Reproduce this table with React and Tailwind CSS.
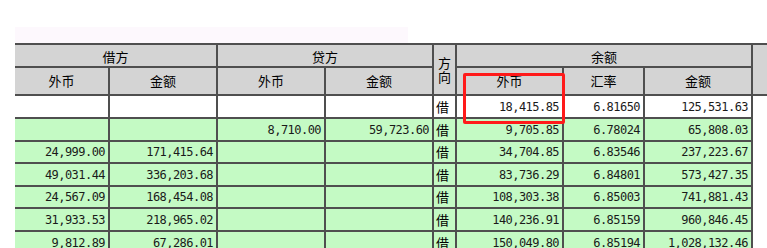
import React from 'react'

const cn = '"Noto Sans CJK SC", "Noto Sans", sans-serif'
const mono = '"DejaVu Sans Mono", "Liberation Mono", monospace'

// rows: [debit fx, debit amt, credit fx, credit amt, dir, bal fx, rate, bal amt]
const rows = [
  ['', '', '', '', '借', '18,415.85', '6.81650', '125,531.63'],
  ['', '', '8,710.00', '59,723.60', '借', '9,705.85', '6.78024', '65,808.03'],
  ['24,999.00', '171,415.64', '', '', '借', '34,704.85', '6.83546', '237,223.67'],
  ['49,031.44', '336,203.68', '', '', '借', '83,736.29', '6.84801', '573,427.35'],
  ['24,567.09', '168,454.08', '', '', '借', '108,303.38', '6.85003', '741,881.43'],
  ['31,933.53', '218,965.02', '', '', '借', '140,236.91', '6.85159', '960,846.45'],
  ['9,812.89', '67,286.01', '', '', '借', '150,049.80', '6.85194', '1,028,132.46'],
]

function Head({ children, className = '' }) {
  return (
    <div
      className={`bg-[#d4d4d4] flex items-center justify-center text-[13px] text-black ${className}`}
      style={{ fontFamily: cn }}
    >
      {children}
    </div>
  )
}

function Num({ value, bg }) {
  return (
    <div
      className={`${bg} flex items-center justify-end pr-[3px] text-[12px] tracking-[-0.55px] text-[#1a1a1a] whitespace-nowrap`}
      style={{ fontFamily: mono }}
    >
      {value}
    </div>
  )
}

export default function App() {
  return (
    <div className="relative w-[767px] h-[248px] overflow-hidden bg-white">
      <div className="ml-[15px] mt-[27px] w-[393px] h-[16px] bg-[#fdf8fd]" />

      <div className="ml-[15px] w-[752px] border-t-2 border-[#4f4f4f] bg-[#4f4f4f] grid grid-cols-[93px_106px_106px_106px_21px_105px_79px_106px_1fr] grid-rows-[21px_26px_21px_21px_20px_21px_20px_21px_21px] gap-[2px]">
        {/* header row 1 */}
        <Head className="col-span-2 pt-[3px]">借方</Head>
        <Head className="col-span-2 pt-[3px]">贷方</Head>
        <Head className="row-span-2 flex-col leading-[14px] pt-[1px]">
          <span>方</span>
          <span>向</span>
        </Head>
        <Head className="col-span-3 pt-[3px]">余额</Head>
        <Head className="row-span-2" />

        {/* header row 2 */}
        <Head>外币</Head>
        <Head>金额</Head>
        <Head>外币</Head>
        <Head>金额</Head>
        <Head>外币</Head>
        <Head>汇率</Head>
        <Head>金额</Head>

        {rows.map((r, i) => {
          const bg = i === 0 ? 'bg-white' : 'bg-[#c4fac4]'
          return (
            <React.Fragment key={i}>
              <Num value={r[0]} bg={bg} />
              <Num value={r[1]} bg={bg} />
              <Num value={r[2]} bg={bg} />
              <Num value={r[3]} bg={bg} />
              <div
                className={`${bg} flex items-center pl-[2px] text-[13px] text-black`}
                style={{ fontFamily: cn }}
              >
                {r[4]}
              </div>
              <Num value={r[5]} bg={bg} />
              <Num value={r[6]} bg={bg} />
              <Num value={r[7]} bg={bg} />
              {i === 0 && <div className="row-span-7 bg-white" />}
            </React.Fragment>
          )
        })}
      </div>

      {/* highlight box */}
      <div className="absolute left-[463px] top-[73px] w-[102px] h-[51px] border-[3px] border-[#ff1a1a] rounded-[2px]" />
    </div>
  )
}
